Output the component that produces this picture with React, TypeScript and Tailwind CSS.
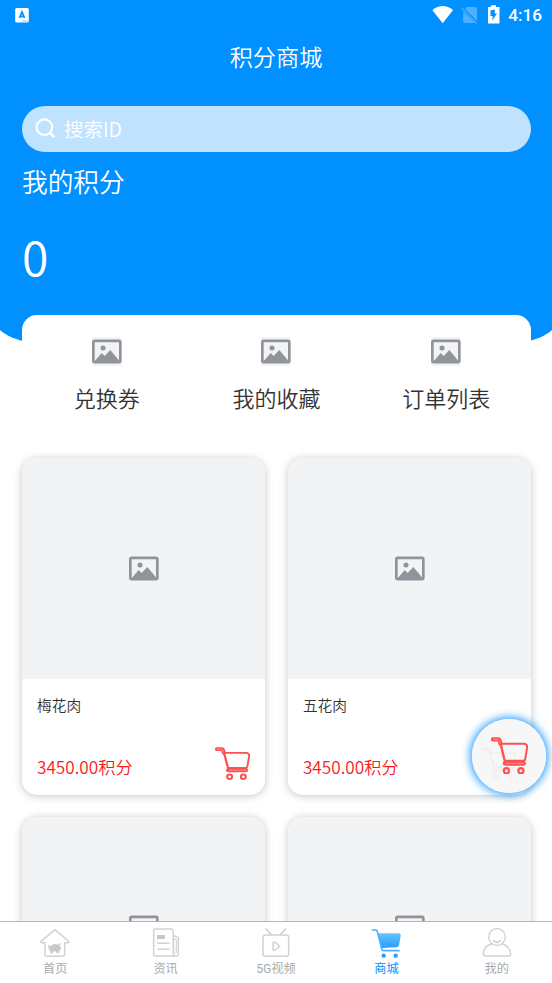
import React from 'react';

const cjk = "font-['Noto_Sans_CJK_SC',sans-serif] font-[350]";

function Placeholder() {
  return (
    <svg viewBox="0 0 90 90" className="block size-[30px] shrink-0">
      <rect width="88" height="87" fill="#f2f3f5" />
      <rect x="4" y="11.5" width="81" height="64" rx="4" fill="none" stroke="#909399" strokeWidth="8" />
      <circle cx="33" cy="33" r="7.5" fill="#909399" />
      <path d="M8 73 L29 48 L38 57 L55 39 L80 69 V75 H8Z" fill="#909399" />
    </svg>
  );
}

function CartOutline({ className }: { className: string }) {
  return (
    <svg viewBox="0 0 110 111" preserveAspectRatio="none" className={className} fill="none" stroke="#fd5050" strokeLinejoin="round" strokeLinecap="round">
      <path d="M6 7 H22 Q25 7 26 13 L28 20" strokeWidth="12.5" />
      <path d="M32 20 H98 Q109 20 107 33 L102 64 Q101 70 96 70 H44" strokeWidth="6" />
      <path d="M29 22 L43 79" strokeWidth="7" />
      <path d="M42 78 H97" strokeWidth="14" />
      <path d="M7 7 H21 Q24 7 26 17" stroke="#ffa0a0" strokeWidth="2.5" />
      <path d="M45 78 H97" stroke="#ffa0a0" strokeWidth="2.5" />
      <circle cx="46" cy="100" r="7.7" strokeWidth="6.5" />
      <circle cx="89" cy="100" r="7.7" strokeWidth="6.5" />
    </svg>
  );
}

function Product({ name }: { name?: string }) {
  return (
    <div className="h-[337px] overflow-hidden rounded-[15px] bg-white shadow-[0_1px_8px_rgba(0,0,0,0.23)]">
      <div className="flex h-[221.5px] items-center justify-center bg-[#f2f3f5] pl-px">
        <Placeholder />
      </div>
      {name && (
        <div className="flex h-[115px] flex-col justify-between px-[15px] pt-[15px] pb-[14px]">
          <div className="text-[14.7px] leading-[22px] text-[#333]">{name}</div>
          <div className="flex items-center justify-between">
            <span className="pt-[6px] text-[17.2px] leading-[24px] text-[#fa1a1f]">3450.00积分</span>
            <CartOutline className="h-[33px] w-[35px]" />
          </div>
        </div>
      )}
    </div>
  );
}

function StatusBar() {
  return (
    <div className="flex h-[30px] items-center justify-between pr-[10px] pl-[15px] text-white">
      <svg viewBox="0 0 14 15" className="h-[15px] w-[14px]">
        <rect x="0.2" y="0" width="13.6" height="14.6" rx="1.5" fill="#fff" />
        <path d="M4.5 10 L7 4 L9.5 10 M5.2 8.5 H8.8" stroke="#0090ff" strokeWidth="1.7" fill="none" />
        <path d="M7 13 H13" stroke="#8bccff" strokeWidth="1" />
      </svg>
      <div className="flex items-center">
        <svg viewBox="0 0 70 20" className="h-[20px] w-[70px]">
          <path d="M0.3 5 Q10.7 -3 21.1 5 L10.7 18.2Z" fill="#fff" />
          <path d="M34.5 2 H43 Q45 2 45 4 V16 L33 4Z M31.2 6.5 L43 18 H33 Q31 18 31 16Z" fill="#4db1ff" />
          <path d="M29.5 3 L44.7 18.6" stroke="#4db1ff" strokeWidth="1.2" />
          <path d="M59 0.3 H64 V2 H67.5 V18.6 H56 V2 H59Z" fill="#fff" />
          <path d="M63 4.5 L58.5 5.5 V11 H60.7 L60.3 15.5 L65 8.5 H62.6Z" fill="#0090ff" />
        </svg>
        <span className="mt-[2px] ml-[6px] font-['Roboto',sans-serif] text-[17.2px] leading-none font-medium">4:16</span>
      </div>
    </div>
  );
}

const tabs = [
  {
    label: '首页',
    icon: (
      <g stroke="#d2d2d2" strokeWidth="4.5" strokeLinejoin="round" strokeLinecap="round" fill="none">
        <path d="M45 5 L3 40 Q2 44 6 44 H15 V79 Q15 85 20 85 H69 Q74 85 74 79 V44 H83 Q88 44 86 40Z" />
        <path d="M25 51 L32 54 Q44 44 53 50 L61 46 L59 55 L64 61 L59 67 L57 75 H50 L48 70 H39 L38 76 H32 L30 67 L26 62Z" fill="#c8c8c8" stroke="#d2d2d2" strokeWidth="1" />
      </g>
    ),
  },
  {
    label: '资讯',
    icon: (
      <g stroke="#d2d2d2" strokeWidth="4.5" strokeLinejoin="round" strokeLinecap="round" fill="none">
        <path d="M13 3 H62 L67 9 V84 H13 Q8 84 8 79 V8 Q8 3 13 3Z" />
        <path d="M67 25 H76 L82 31 V79 Q82 84 76 84 H67" />
        <rect x="68" y="33" width="8" height="43" rx="3" strokeWidth="3" />
        <path d="M20 46 H54 M20 64 H54" />
        <path d="M18 21 H42 V33 H18Z" fill="#c8c8c8" stroke="none" />
      </g>
    ),
  },
  {
    label: '5G视频',
    icon: (
      <g stroke="#d2d2d2" strokeWidth="4.5" strokeLinejoin="round" strokeLinecap="round" fill="none">
        <rect x="6" y="21" width="77" height="64" rx="7" />
        <path d="M15 3 L31 20 M74 3 L58 20" strokeWidth="5" />
        <path d="M37 42 Q42 41 55 54 Q56 56 54 57 L40 67 Q36 68 36 63Z" />
      </g>
    ),
  },
  {
    label: '商城',
    active: true,
    icon: (
      <>
        <defs>
          <linearGradient id="cartFill" x1="0" y1="0" x2="0" y2="1">
            <stop offset="0" stopColor="#65c2ff" />
            <stop offset="1" stopColor="#299dff" />
          </linearGradient>
        </defs>
        <path d="M20 16 H82 Q90 17 89 24 L84 52 Q82 58 76 58 L32 60Z" fill="url(#cartFill)" />
        <path d="M4 6 H15 Q18 6 19 11 L33 65 Q34 68 38 68 H84" stroke="#48b1ff" strokeWidth="5" strokeLinecap="round" fill="none" />
        <circle cx="38" cy="83" r="6.5" fill="#299dff" />
        <circle cx="74" cy="83" r="6.5" fill="#299dff" />
      </>
    ),
  },
  {
    label: '我的',
    icon: (
      <g stroke="#d2d2d2" strokeWidth="4.2" strokeLinejoin="round" strokeLinecap="round" fill="none">
        <circle cx="45" cy="27" r="25" />
        <path d="M34 38 Q45 47 56 38" />
        <path d="M28 48 Q4 55 4 78 Q4 84 10 84 H80 Q87 84 86 78 Q85 57 62 48" />
      </g>
    ),
  },
];

export default function App() {
  return (
    <div className={`relative flex h-[983px] w-[552px] flex-col overflow-hidden bg-white ${cjk}`}>
      <main className="relative isolate h-[921px] overflow-hidden">
        <div className="absolute top-0 -right-[5px] -left-[5px] -z-10 h-[345px] rounded-b-[60px_25px] bg-[#0090ff]" />
        <StatusBar />
        <h1 className="mt-[9px] text-center text-[23.2px] leading-[34px] font-[350] text-white">积分商城</h1>
        <div className="mt-[33px] mr-[21px] ml-[22px] flex h-[46px] items-center rounded-full bg-white/75 pl-[13px] text-white">
          <svg viewBox="0 0 22 22" className="size-[22px]" fill="none" stroke="currentColor" strokeWidth="2.2">
            <circle cx="9.4" cy="9.2" r="7.8" />
            <path d="M15 14.9 L19.3 19.2" strokeWidth="2.5" />
          </svg>
          <span className="mb-[1px] ml-[7px] text-[19.5px] leading-[28px]">搜索ID</span>
        </div>
        <div className="mt-[10px] ml-[22px] text-[25.7px] leading-[38px] text-white">我的积分</div>
        <div className="mt-[19px] ml-[22px] text-[48px] leading-[72px] text-white">0</div>
        <div className="mt-[23.7px] mr-[21px] ml-[22px] grid h-[121px] grid-cols-3 rounded-[15px] bg-white pt-[22px]">
          {['兑换券', '我的收藏', '订单列表'].map((t) => (
            <div key={t} className="flex flex-col items-center">
              <Placeholder />
              <span className="mt-[14px] text-[22px] leading-[32px] text-[#333]">{t}</span>
            </div>
          ))}
        </div>
        <div className="mt-[22.3px] mr-[21px] ml-[22px] grid grid-cols-2 gap-x-[22.8px] gap-y-[22px]">
          <Product name="梅花肉" />
          <Product name="五花肉" />
          <Product />
          <Product />
        </div>
      </main>
      <nav className="z-10 grid h-[62px] grid-cols-5 border-t border-[#b5b5b5] bg-white pt-[6px]">
        {tabs.map((t) => (
          <div key={t.label} className="flex flex-col items-center">
            <svg viewBox="0 0 90 90" className="size-[30px]">{t.icon}</svg>
            <span className={`mt-[2px] font-['Roboto','Noto_Sans_CJK_SC',sans-serif] text-[12.2px] leading-[18px] font-normal ${t.active ? 'text-[#0090ff]' : 'text-[#aaa]'}`}>{t.label}</span>
          </div>
        ))}
      </nav>
      <button className="absolute top-[718.5px] left-[472px] z-20 flex size-[74.2px] items-center justify-center rounded-full bg-[#f7f7f7]/95 shadow-[0_0_8px_2px_#2a9fff]">
        <CartOutline className="h-[37.5px] w-[37px]" />
      </button>
    </div>
  );
}
